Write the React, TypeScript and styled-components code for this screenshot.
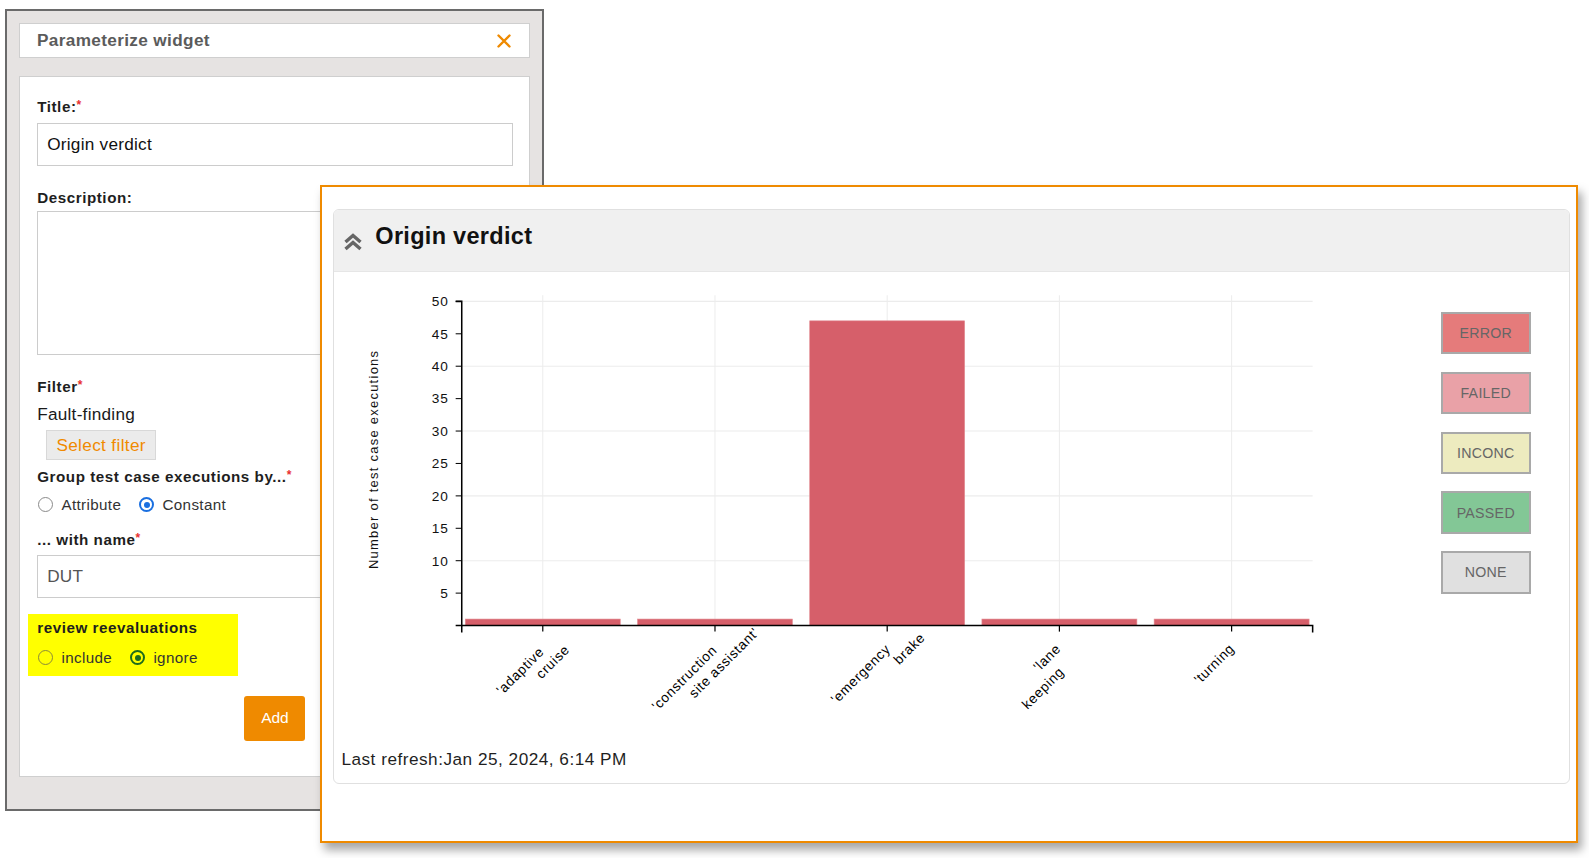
import React from 'react'
import styled, { createGlobalStyle } from 'styled-components'

const GlobalStyle = createGlobalStyle`
  html, body {
    margin: 0;
    padding: 0;
    background: #fff;
    font-family: "Liberation Sans", Arial, sans-serif;
  }
`

const Desktop = styled.div`
  position: relative;
  width: 1589px;
  height: 858px;
  overflow: hidden;
  background: #fff;
`

/* ---------- parameterize dialog ---------- */

const Dialog = styled.div`
  position: absolute;
  left: 5px;
  top: 9px;
  width: 539px;
  height: 802px;
  border: 2px solid #6a6a6a;
  background: #e6e3e2;
  padding: 12px 12px 0 12px;
  box-sizing: border-box;
  display: flex;
  flex-direction: column;
  gap: 18px;
`

const DialogHeader = styled.div`
  height: 35px;
  box-sizing: border-box;
  background: #fff;
  border: 1px solid #cfcfcf;
  display: flex;
  align-items: center;
  justify-content: space-between;
  padding: 0 18px 0 17px;
`

const DialogTitle = styled.div`
  font-size: 17.2px;
  font-weight: bold;
  letter-spacing: 0.35px;
  color: #5b5b5b;
`

const CloseButton = styled.button`
  border: none;
  background: none;
  padding: 0;
  width: 14px;
  height: 14px;
  display: flex;
  cursor: pointer;
`

const DialogBody = styled.div`
  height: 701px;
  box-sizing: border-box;
  background: #fff;
  border: 1px solid #cfcfcf;
  padding: 21.4px 16.3px 0 17.2px;
  display: flex;
  flex-direction: column;
`

const FieldLabel = styled.div<{ $top?: number }>`
  font-size: 15.2px;
  line-height: 18px;
  font-weight: bold;
  letter-spacing: 0.55px;
  color: #1e1e1e;
  margin-top: ${(p) => p.$top ?? 0}px;
`

const Required = styled.span`
  color: #e83030;
  font-size: 12px;
  letter-spacing: 0;
  vertical-align: top;
  position: relative;
  top: -2px;
`

const TextInput = styled.div<{ $muted?: boolean }>`
  margin-top: 6.2px;
  height: 43px;
  box-sizing: border-box;
  border: 1px solid #cccccc;
  display: flex;
  align-items: center;
  padding-left: 9px;
  font-size: 17.2px;
  letter-spacing: 0.25px;
  color: ${(p) => (p.$muted ? '#555' : '#111')};
`

const TextArea = styled.div`
  margin-top: 4px;
  height: 144px;
  box-sizing: border-box;
  border: 1px solid #cccccc;
`

const PlainText = styled.div`
  margin-top: 8.4px;
  font-size: 17.2px;
  line-height: 20px;
  letter-spacing: 0.25px;
  color: #1a1a1a;
`

const SelectFilter = styled.button`
  align-self: flex-start;
  margin: 6.2px 0 0 9.2px;
  height: 29.5px;
  padding: 0 9px;
  background: #ebebeb;
  border: 1px solid #d8d8d8;
  color: #f08a00;
  font-family: inherit;
  font-size: 17.2px;
  letter-spacing: 0.35px;
  cursor: pointer;
`

const RadioRow = styled.div<{ $top: number; $gap: number }>`
  margin-top: ${(p) => p.$top}px;
  height: 18px;
  display: flex;
  align-items: center;
  gap: ${(p) => p.$gap}px;
`

const RadioOption = styled.label`
  display: flex;
  align-items: center;
  gap: 8.3px;
  font-size: 15.2px;
  letter-spacing: 0.35px;
  color: #333;
`

const RadioCircle = styled.span<{ $checked?: boolean; $color: string }>`
  width: 15px;
  height: 15px;
  margin-left: 1px;
  box-sizing: border-box;
  border-radius: 50%;
  border: ${(p) => (p.$checked ? `2px solid ${p.$color}` : `1.5px solid ${p.$color}`)};
  display: flex;
  align-items: center;
  justify-content: center;
  background: transparent;

  &::after {
    content: '';
    display: ${(p) => (p.$checked ? 'block' : 'none')};
    width: 6px;
    height: 6px;
    border-radius: 50%;
    background: ${(p) => p.$color};
  }
`

const Highlight = styled.div`
  margin: 16px 0 0 -9px;
  width: 210px;
  box-sizing: border-box;
  background: #ffff00;
  padding: 5.2px 0 9.2px 9px;
`

const AddButton = styled.button`
  align-self: center;
  margin-top: 20.2px;
  width: 61px;
  height: 44.6px;
  border: none;
  border-radius: 3px;
  background: #ef8a00;
  color: #fff;
  font-family: inherit;
  font-size: 15.5px;
  cursor: pointer;
`

/* ---------- widget ---------- */

const Widget = styled.div`
  position: absolute;
  left: 320px;
  top: 185px;
  width: 1258px;
  height: 658px;
  box-sizing: border-box;
  border: 2px solid #ef8a00;
  background: #fff;
  box-shadow: 4px 7px 9px rgba(0, 0, 0, 0.35);
  padding: 21.7px 6.5px 0 11.3px;
`

const Card = styled.div`
  border: 1px solid #e0e0e0;
  border-radius: 6px;
  overflow: hidden;
  background: #fff;
`

const CardHeader = styled.div`
  height: 62.8px;
  background: #f0f0f0;
  border-bottom: 1px solid #e6e6e6;
  display: flex;
  align-items: center;
  gap: 12px;
  padding: 0 0 8px 9px;
  box-sizing: border-box;
`

const CollapseIcon = styled.span`
  display: flex;
  margin-top: 11px;
`

const CardTitle = styled.h2`
  margin: 0;
  font-size: 23.5px;
  font-weight: bold;
  letter-spacing: 0.3px;
  color: #111;
`

const ChartRow = styled.div`
  display: flex;
  align-items: flex-start;
`

const Legend = styled.div`
  margin-top: 39.5px;
  display: flex;
  flex-direction: column;
  gap: 17.3px;
`

const LegendItem = styled.div<{ $bg: string }>`
  width: 90.2px;
  height: 42.5px;
  box-sizing: border-box;
  border: 2px solid #a9a9a9;
  background: ${(p) => p.$bg};
  color: #666;
  font-size: 14.2px;
  letter-spacing: 0.3px;
  display: flex;
  align-items: center;
  justify-content: center;
`

const Refresh = styled.div`
  margin: 8.4px 0 0 7.1px;
  padding-bottom: 14.3px;
  font-size: 17.2px;
  line-height: 20px;
  letter-spacing: 0.5px;
  color: #1f1f1f;
`

const legend = [
  { name: 'ERROR', bg: '#e57b7b' },
  { name: 'FAILED', bg: '#e9a1a7' },
  { name: 'INCONC', bg: '#edebbf' },
  { name: 'PASSED', bg: '#83c796' },
  { name: 'NONE', bg: '#e0e0e0' },
]

type AxisLabel = { text: string; cx: number; cy: number }
const bars: { x: number; value: number; labels: AxisLabel[] }[] = [
  { x: 206, value: 1, labels: [{ text: "'adaptive", cx: 184, cy: 394 }, { text: 'cruise', cx: 216, cy: 385 }] },
  { x: 376, value: 1, labels: [{ text: "'construction", cx: 346, cy: 401 }, { text: "site assistant'", cx: 385, cy: 386 }] },
  { x: 546, value: 47, labels: [{ text: "'emergency", cx: 520, cy: 397 }, { text: 'brake', cx: 568, cy: 372 }] },
  { x: 716, value: 1, labels: [{ text: "'lane", cx: 704, cy: 381 }, { text: 'keeping', cx: 700, cy: 411 }] },
  { x: 886, value: 1, labels: [{ text: "'turning", cx: 869, cy: 387 }] },
]

const Y0 = 349
const UNIT = 6.4
const AX_L = 126
const AX_R = 966
const FONT = 'Liberation Sans, Arial, sans-serif'

function Chart() {
  const ticks = [5, 10, 15, 20, 25, 30, 35, 40, 45, 50]
  return (
    <svg width={1106.4} height={468} viewBox="0 0 1092 462" style={{ display: 'block', flexShrink: 0 }}>
      {[10, 20, 30, 40, 50].map((v) => (
        <line key={v} x1={AX_L} x2={AX_R} y1={Y0 - v * UNIT} y2={Y0 - v * UNIT} stroke="#ececec" />
      ))}
      {bars.map((b) => (
        <line key={b.x} x1={b.x} x2={b.x} y1={23} y2={Y0} stroke="#ececec" />
      ))}
      {bars.map((b) => (
        <rect
          key={b.x}
          x={b.x - 76.5}
          y={Y0 - b.value * UNIT}
          width={153}
          height={b.value * UNIT}
          fill="#d65f6a"
          stroke="#e38e95"
          strokeWidth={0.6}
        />
      ))}
      <path d={`M${AX_L - 6},29H${AX_L}V${Y0}H${AX_L - 6}`} fill="none" stroke="#000" strokeWidth={1.5} />
      {ticks.map((v) => (
        <g key={v}>
          <line x1={AX_L - 6} x2={AX_L} y1={Y0 - v * UNIT} y2={Y0 - v * UNIT} stroke="#000" />
          <text
            x={AX_L - 13}
            y={Y0 - v * UNIT + 4.8}
            textAnchor="end"
            fontSize={13.5}
            letterSpacing={0.8}
            fill="#111"
            fontFamily={FONT}
          >
            {v}
          </text>
        </g>
      ))}
      <text
        transform="translate(43,185) rotate(-90)"
        textAnchor="middle"
        fontSize={12.8}
        letterSpacing={1.25}
        fill="#111"
        fontFamily={FONT}
      >
        Number of test case executions
      </text>
      <path d={`M${AX_L},${Y0 + 7}V${Y0}H${AX_R}V${Y0 + 7}`} fill="none" stroke="#000" strokeWidth={1.5} />
      {bars.map((b) => (
        <line key={b.x} x1={b.x} x2={b.x} y1={Y0} y2={Y0 + 6} stroke="#000" strokeWidth={1.2} />
      ))}
      {bars.map((b) =>
        b.labels.map((l) => (
          <text
            key={l.text}
            transform={`translate(${l.cx + 3},${l.cy + 3}) rotate(-45)`}
            textAnchor="middle"
            fontSize={13.5}
            letterSpacing={0.7}
            fill="#000"
            fontFamily={FONT}
          >
            {l.text}
          </text>
        )),
      )}
    </svg>
  )
}

function ChevronsUp() {
  return (
    <svg width={20} height={20} viewBox="0 0 20 20">
      <path d="M2.5 10 L10 3.5 L17.5 10 M2.5 17 L10 10.5 L17.5 17" fill="none" stroke="#666" strokeWidth={3.4} />
    </svg>
  )
}

function CloseIcon() {
  return (
    <svg width={14} height={14} viewBox="0 0 14 14">
      <path d="M1.5 1.5 L12.5 12.5 M12.5 1.5 L1.5 12.5" stroke="#ef8a00" strokeWidth={2.4} strokeLinecap="round" />
    </svg>
  )
}

export default function App() {
  return (
    <>
      <GlobalStyle />
      <Desktop>
        <Dialog>
          <DialogHeader>
            <DialogTitle>Parameterize widget</DialogTitle>
            <CloseButton aria-label="close">
              <CloseIcon />
            </CloseButton>
          </DialogHeader>
          <DialogBody>
            <FieldLabel>
              Title:<Required>*</Required>
            </FieldLabel>
            <TextInput>Origin verdict</TextInput>
            <FieldLabel $top={23}>Description:</FieldLabel>
            <TextArea />
            <FieldLabel $top={23.3}>
              Filter<Required>*</Required>
            </FieldLabel>
            <PlainText>Fault-finding</PlainText>
            <SelectFilter>Select filter</SelectFilter>
            <FieldLabel $top={8.2}>
              Group test case executions by...<Required>*</Required>
            </FieldLabel>
            <RadioRow $top={9.4} $gap={17}>
              <RadioOption>
                <RadioCircle $color="#8a8a8a" />
                Attribute
              </RadioOption>
              <RadioOption>
                <RadioCircle $checked $color="#1a6fe0" />
                Constant
              </RadioOption>
            </RadioRow>
            <FieldLabel $top={17.4}>
              ... with name<Required>*</Required>
            </FieldLabel>
            <TextInput $muted>DUT</TextInput>
            <Highlight>
              <FieldLabel>review reevaluations</FieldLabel>
              <RadioRow $top={11.4} $gap={17}>
                <RadioOption>
                  <RadioCircle $color="#8a8a3a" />
                  include
                </RadioOption>
                <RadioOption>
                  <RadioCircle $checked $color="#1d6b1d" />
                  ignore
                </RadioOption>
              </RadioRow>
            </Highlight>
            <AddButton>Add</AddButton>
          </DialogBody>
        </Dialog>

        <Widget>
          <Card>
            <CardHeader>
              <CollapseIcon>
                <ChevronsUp />
              </CollapseIcon>
              <CardTitle>Origin verdict</CardTitle>
            </CardHeader>
            <ChartRow>
              <Chart />
              <Legend>
                {legend.map((l) => (
                  <LegendItem key={l.name} $bg={l.bg}>
                    {l.name}
                  </LegendItem>
                ))}
              </Legend>
            </ChartRow>
            <Refresh>Last refresh:Jan 25, 2024, 6:14 PM</Refresh>
          </Card>
        </Widget>
      </Desktop>
    </>
  )
}
